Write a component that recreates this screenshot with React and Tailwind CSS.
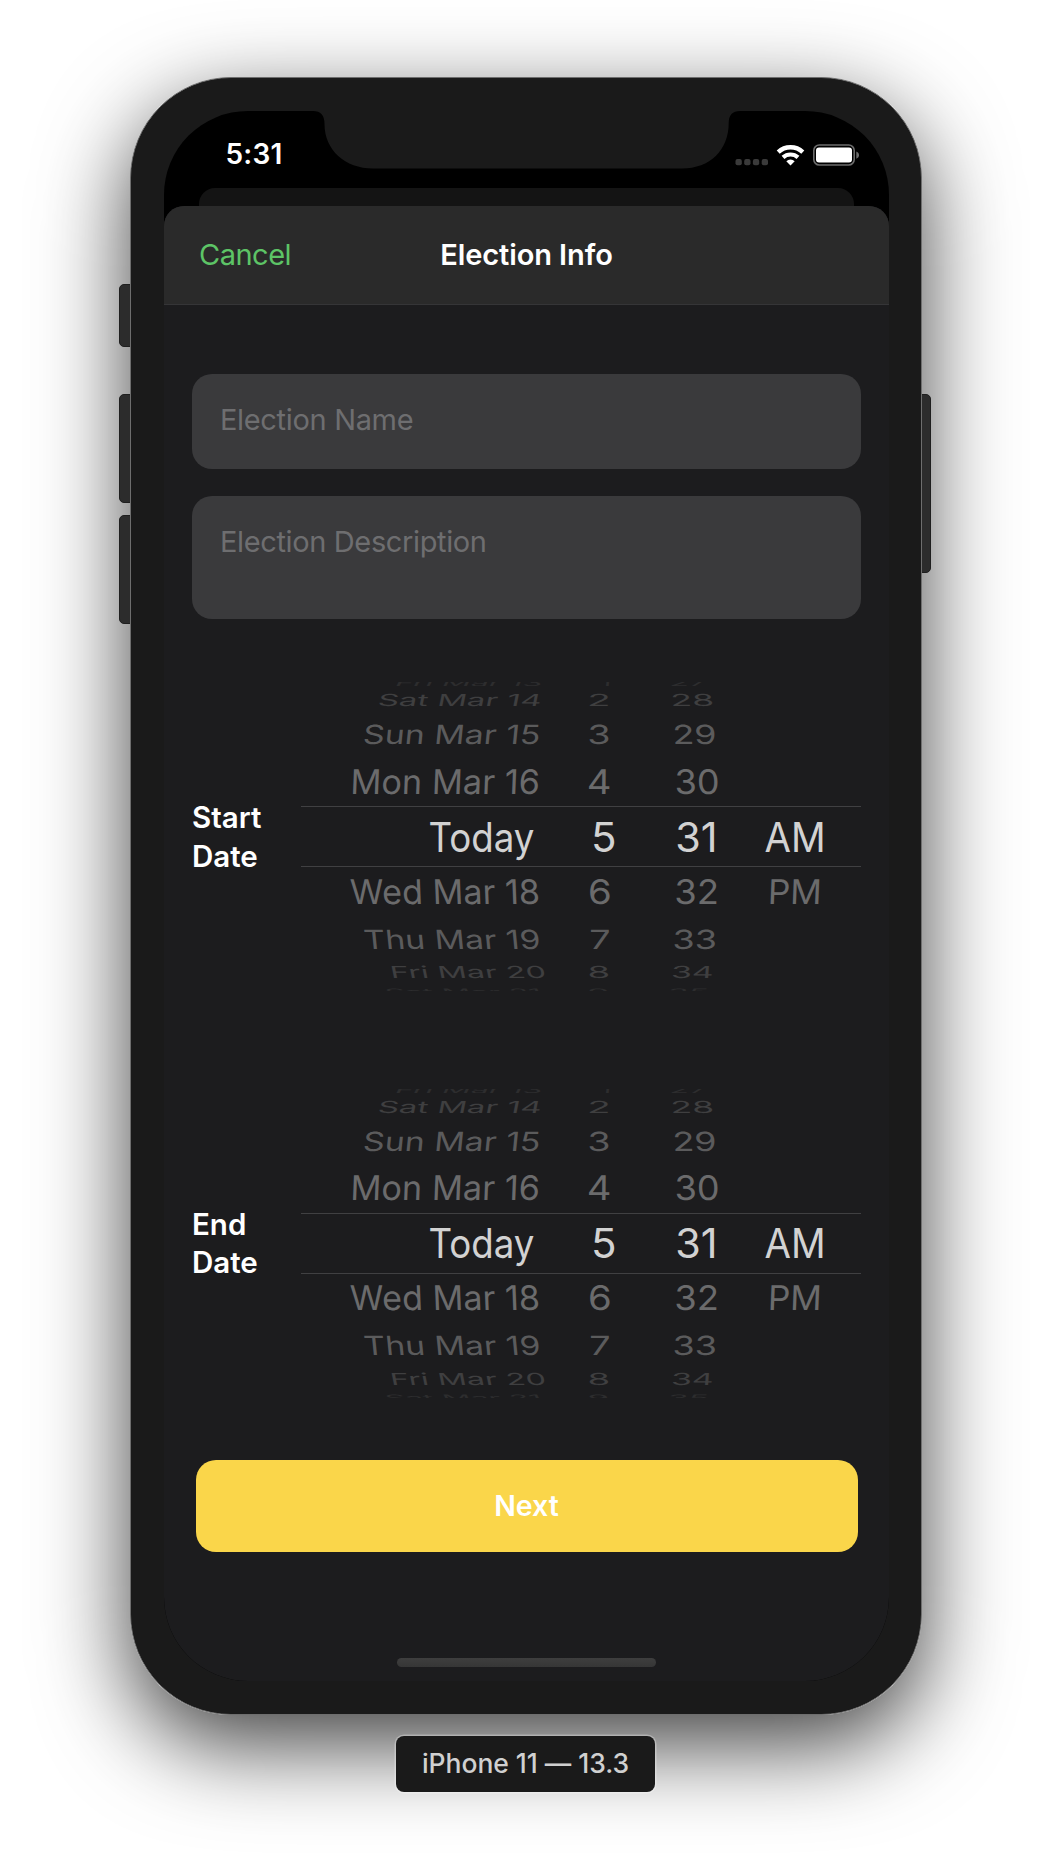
import React from "react";

const WHEEL_FONT = 40.5;
const ctx = document.createElement("canvas").getContext("2d");

// One entry per visible wheel row, from the top of the drum to the bottom.
const ROWS = [
  { box: "h-[18px] text-[#2d2d2e]", sy: 0.22, lean: 0.5, cells: [["Fri Mar 13", 97, 240], ["1", 35, 43], ["27", 29, 63]] },
  { box: "h-[18.8px] text-[#3f3f40]", sy: 0.41, lean: 0.2, cells: [["Sat Mar 14", 79, 239], ["2", 24, 42], ["28", 31, 70]] },
  { box: "h-[48.8px] text-[#5b5b5c]", sy: 0.65, lean: 0.1, cells: [["Sun Mar 15", 64, 237.5], ["3", 23.5, 42.5], ["29", 33, 72.5]] },
  { box: "h-[46.2px] text-[#6b6b6c]", sy: 0.84, lean: 0.04, cells: [["Mon Mar 16", 52.5, 237], ["4", 23, 43.5], ["30", 34.5, 75.5]] },
  { box: "h-[63.8px] text-[#d2d2d2]", sy: 1, lean: 0, cells: [["Today", 129, 232.5], ["5", 28, 48], ["31", 35.5, 72], ["AM", 25.5, 82.5]] },
  { box: "h-[46.2px] text-[#6b6b6c]", sy: 0.84, lean: -0.04, cells: [["Wed Mar 18", 50, 237], ["6", 24, 43.5], ["32", 34.5, 74.5], ["PM", 31, 79]] },
  { box: "h-[47.8px] text-[#5b5b5c]", sy: 0.65, lean: -0.1, cells: [["Thu Mar 19", 64, 237.5], ["7", 25, 43], ["33", 32.5, 73]] },
  { box: "h-[19.2px] text-[#3f3f40]", sy: 0.41, lean: -0.2, cells: [["Fri Mar 20", 92, 243], ["8", 23.5, 42], ["34", 31, 70]] },
  { box: "h-[17.8px] text-[#2d2d2e]", sy: 0.22, lean: -0.5, cells: [["Sat Mar 21", 86, 238], ["9", 23.5, 41], ["35", 28, 65]] },
];

// The drum's perspective leans each column towards the middle of the wheel.
const COLUMN_LEAN = [1, 0.2, -0.35, -1];

function drumTransform(text, left, right, sy, lean) {
  ctx.font = "400 " + WHEEL_FONT * 4 + "px Inter";
  const m = ctx.measureText(text);
  const inkLeft = -m.actualBoundingBoxLeft / 4;
  const inkRight = m.actualBoundingBoxRight / 4;
  const sx = (right - left) / (inkRight - inkLeft);
  return `matrix(${sx}, 0, ${-lean * sy}, ${sy}, ${left - inkLeft * sx}, 0.6)`;
}

function Wheel() {
  return (
    <div className="relative h-[309px] w-[560px] overflow-hidden">
      <div className="-mt-[8.7px] flex flex-col">
        {ROWS.map((row) => (
          <div key={row.cells[0][0]} className={"grid shrink-0 grid-cols-[265px_76px_98px_121px] items-center " + row.box}>
            {row.cells.map(([text, left, right], i) => (
              <div key={text} className="flex h-0 items-center">
                <span
                  className="origin-left text-[40.5px] leading-none whitespace-nowrap"
                  style={{ transform: drumTransform(text, left, right, row.sy, row.lean * COLUMN_LEAN[i]) }}
                >
                  {text}
                </span>
              </div>
            ))}
          </div>
        ))}
      </div>
      <div className="absolute inset-x-0 top-[124px] h-[61px] border-y border-[#404042]" />
    </div>
  );
}

function DateField({ first }) {
  return (
    <div className="flex items-center">
      <div className="w-[109px] text-[29.5px] leading-[38.5px] font-semibold text-white">
        {first}
        <br />
        Date
      </div>
      <Wheel />
    </div>
  );
}

function StatusIcons() {
  return (
    <svg width="126" height="24" viewBox="0 0 126 24" fill="none">
      <g fill="#3a3a3a">
        <rect x="2.5" y="16" width="6.3" height="6.3" rx="2" />
        <rect x="11.2" y="16" width="6.3" height="6.3" rx="2" />
        <rect x="19.9" y="16" width="6.3" height="6.3" rx="2" />
        <rect x="28.7" y="16" width="6.3" height="6.3" rx="2" />
      </g>
      <g stroke="#fff">
        <path d="M45.2 9.1A18 18 0 0 1 69.8 9.1" strokeWidth="4.4" />
        <path d="M50 14.4A11.2 11.2 0 0 1 65 14.4" strokeWidth="4.2" />
      </g>
      <path d="M57.5 22.6L53.3 18.2A6.2 6.2 0 0 1 61.7 18.2Z" fill="#fff" />
      <rect x="80.8" y="2" width="40.4" height="20" rx="5.5" stroke="#6c6c6c" strokeWidth="1.6" />
      <rect x="83" y="4.5" width="36" height="15" rx="3" fill="#fff" />
      <path d="M123.3 8.6C125.3 9.6 126 10.7 126 12.2S125.3 14.8 123.3 15.8Z" fill="#6c6c6c" />
    </svg>
  );
}

export default function App() {
  return (
    <div className="flex h-[1864px] w-[1052px] flex-col items-center overflow-hidden bg-white font-['Inter',sans-serif]">
      <div className="relative mt-[77px] h-[1638px] w-[792px] shrink-0">
        <div className="absolute inset-0 rounded-[101px] shadow-[0_30px_90px_rgba(0,0,0,0.75)]" />
        <div className="absolute top-[207px] -left-[11px] h-[63px] w-5 rounded-[5px] border border-[#1f1f1f] bg-[#2c2c2c]" />
        <div className="absolute top-[317px] -left-[11px] h-[109px] w-5 rounded-[5px] border border-[#1f1f1f] bg-[#2c2c2c]" />
        <div className="absolute top-[438px] -left-[11px] h-[109px] w-5 rounded-[5px] border border-[#1f1f1f] bg-[#2c2c2c]" />
        <div className="absolute top-[317px] -right-[9px] h-[179px] w-5 rounded-[5px] border border-[#1f1f1f] bg-[#2c2c2c]" />

        <div className="relative h-full w-full rounded-[101px] border border-[#6e6e6e] bg-[#1a1a1a] pt-[33px] pr-8 pl-[33px]">
          <div className="relative flex h-[1570px] flex-col overflow-hidden rounded-[84px] bg-black">
            <svg className="absolute top-0 left-0" width="725" height="60" viewBox="0 0 725 60">
              <path
                d="M149 0Q160.5 0 160.5 13C160.5 39 181 57.5 209 57.5H518C546 57.5 564.7 39 564.7 12Q564.7 0 576 0Z"
                fill="#1a1a1a"
              />
            </svg>

            <div className="relative flex h-[77px] shrink-0 justify-between pt-[24px] pr-[30px] pl-[61.5px]">
              <div className="h-10 text-[28px] leading-[39px] font-semibold tracking-[0.2px] text-white">5:31</div>
              <div className="flex h-10 items-center pb-[1px]">
                <StatusIcons />
              </div>
            </div>
            <div className="mx-[35px] -mb-5 h-[37.5px] shrink-0 rounded-t-[16px] bg-[#141414]" />

            <div className="relative flex flex-1 flex-col overflow-hidden rounded-t-[20px] bg-[#1c1c1e]">
              <div className="grid h-[99px] shrink-0 grid-cols-3 items-center border-b border-[#353537] bg-[#2a2a2a]">
                <div className="pl-[35px] text-[29px] tracking-[-0.5px] text-[#5dc466]">Cancel</div>
                <div className="text-center text-[29px] font-semibold tracking-[-0.1px] whitespace-nowrap text-white">Election Info</div>
              </div>

              <div className="flex flex-col px-7 pt-[69.5px]">
                <div className="h-[94.5px] rounded-[20px] bg-[#3a3a3c] px-7 pt-[25.5px] text-[29px] leading-10 tracking-[-0.33px] text-[#6e6e70]">
                  Election Name
                </div>
                <div className="mt-[27.5px] h-[123px] rounded-[20px] bg-[#3a3a3c] px-7 pt-[26px] text-[29px] leading-10 tracking-[-0.37px] text-[#6e6e70]">
                  Election Description
                </div>
                <div className="mt-[63px] flex flex-col gap-[97.5px]">
                  <DateField first="Start" />
                  <DateField first="End" />
                </div>
                <div className="mx-[3.5px] mt-[62.5px] flex h-[91.5px] items-center justify-center rounded-[20px] bg-[#fad64a] pt-[1.5px] text-[28.5px] font-semibold text-white">
                  Next
                </div>
                <div className="mt-[106.5px] h-[9px] w-[259px] self-center rounded-full bg-linear-to-b from-[#3e3e3e] to-[#363636]" />
              </div>
            </div>
          </div>
        </div>
      </div>

      <div className="relative mt-[21px] mr-px flex h-14 w-[259px] shrink-0 items-center justify-center rounded-lg bg-[#1a1a1a] text-[26.5px] font-medium tracking-[-0.05px] whitespace-nowrap text-[#d0d0d0] shadow-[0_0_0_1.5px_rgba(255,255,255,0.3)]">
        iPhone 11 — 13.3
      </div>
    </div>
  );
}
